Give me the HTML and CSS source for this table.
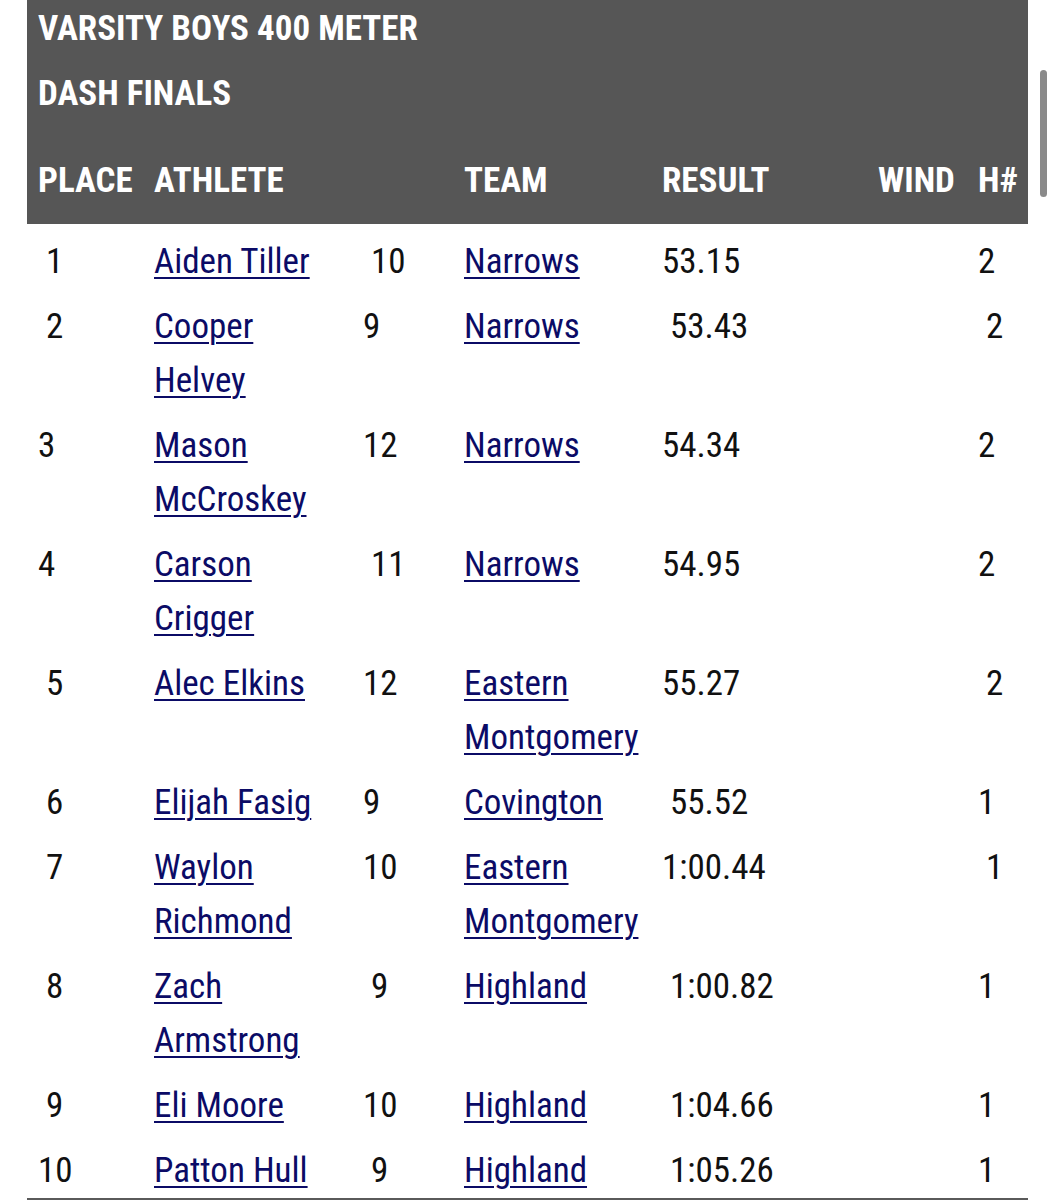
FILE: index.html
```html
<!DOCTYPE html>
<html lang="en">
<head>
<meta charset="utf-8">
<title>Varsity Boys 400 Meter Dash Finals</title>
<link rel="stylesheet" href="styles.css">
</head>
<body>
<div class="page">
  <table class="results">
    <colgroup>
      <col class="c-place"><col class="c-athlete"><col class="c-grade"><col class="c-team"><col class="c-result"><col class="c-wind"><col class="c-heat">
    </colgroup>
    <thead>
      <tr class="title-row">
        <th colspan="3">VARSITY BOYS 400 METER DASH FINALS</th>
        <th colspan="4"></th>
      </tr>
      <tr class="head-row">
        <th>PLACE</th><th>ATHLETE</th><th></th><th>TEAM</th><th>RESULT</th><th>WIND</th><th>H#</th>
      </tr>
    </thead>
    <tbody>
      <tr><td>&nbsp;1</td><td><a href="#">Aiden Tiller</a></td><td>&nbsp;10</td><td><a href="#">Narrows</a></td><td>53.15</td><td></td><td>2</td></tr>
      <tr><td>&nbsp;2</td><td><a href="#">Cooper Helvey</a></td><td>9</td><td><a href="#">Narrows</a></td><td>&nbsp;53.43</td><td></td><td>&nbsp;2</td></tr>
      <tr><td>3</td><td><a href="#">Mason McCroskey</a></td><td>12</td><td><a href="#">Narrows</a></td><td>54.34</td><td></td><td>2</td></tr>
      <tr><td>4</td><td><a href="#">Carson Crigger</a></td><td>&nbsp;11</td><td><a href="#">Narrows</a></td><td>54.95</td><td></td><td>2</td></tr>
      <tr><td>&nbsp;5</td><td><a href="#">Alec Elkins</a></td><td>12</td><td><a href="#">Eastern Montgomery</a></td><td>55.27</td><td></td><td>&nbsp;2</td></tr>
      <tr><td>&nbsp;6</td><td><a href="#">Elijah Fasig</a></td><td>9</td><td><a href="#">Covington</a></td><td>&nbsp;55.52</td><td></td><td>1</td></tr>
      <tr><td>&nbsp;7</td><td><a href="#">Waylon Richmond</a></td><td>10</td><td><a href="#">Eastern Montgomery</a></td><td>1:00.44</td><td></td><td>&nbsp;1</td></tr>
      <tr><td>&nbsp;8</td><td><a href="#">Zach Armstrong</a></td><td>&nbsp;9</td><td><a href="#">Highland</a></td><td>&nbsp;1:00.82</td><td></td><td>1</td></tr>
      <tr><td>&nbsp;9</td><td><a href="#">Eli Moore</a></td><td>10</td><td><a href="#">Highland</a></td><td>&nbsp;1:04.66</td><td></td><td>1</td></tr>
      <tr><td>10</td><td><a href="#">Patton Hull</a></td><td>&nbsp;9</td><td><a href="#">Highland</a></td><td>&nbsp;1:05.26</td><td></td><td>1</td></tr>
    </tbody>
  </table>
  <div class="scroll-thumb"></div>
</div>
</body>
</html>
```

FILE: styles.css
```css
html, body {
  margin: 0;
  padding: 0;
  background: #ffffff;
}

body {
  font-family: "Roboto Condensed", "Roboto", "Liberation Sans Narrow", sans-serif;
  font-stretch: 75%;
  font-size: 35px;
  color: #111111;
}

.page {
  position: relative;
  padding-left: 27px;
  width: 1001px;
}

.results {
  width: 1001px;
  margin-top: -3px;
  border-collapse: collapse;
  table-layout: fixed;
}

.c-place { width: 116px; }
.c-athlete { width: 209px; }
.c-grade { width: 101px; }
.c-team { width: 198px; }
.c-result { width: 216px; }
.c-wind { width: 100px; }
.c-heat { width: 61px; }

.results thead th {
  background: #565656;
  color: #ffffff;
  font-weight: 700;
  text-align: left;
  vertical-align: top;
}

.title-row th {
  line-height: 64.5px;
  padding: 0 11px;
}

.head-row th {
  line-height: 54px;
  padding: 28px 0 16px 11px;
  white-space: nowrap;
}

.results tbody td {
  line-height: 54px;
  padding: 11px 11px 0;
  vertical-align: top;
  text-align: left;
}

.results tbody tr:last-child td {
  border-bottom: 3px solid #5a5a5a;
}

.results a {
  color: #0b0b66;
  text-decoration: underline;
  text-decoration-thickness: 2px;
  text-underline-offset: 4px;
}

.scroll-thumb {
  position: absolute;
  left: 1040px;
  top: 73px;
  width: 7px;
  height: 127px;
  border-radius: 4px;
  background: #8a8a8a;
}
```
